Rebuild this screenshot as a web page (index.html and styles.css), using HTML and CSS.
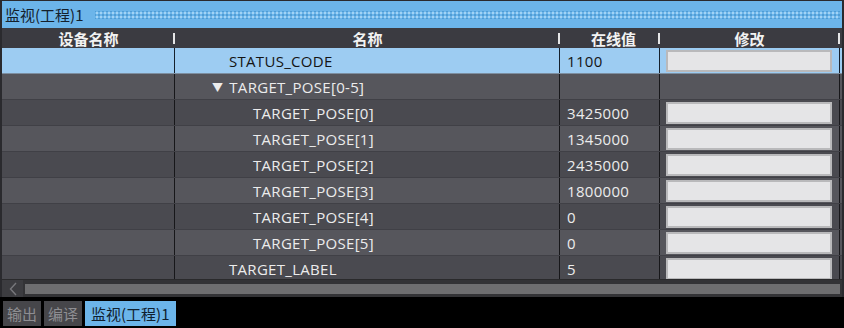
FILE: index.html
```html
<!DOCTYPE html>
<html lang="zh-CN">
<head>
    <meta charset="UTF-8" />
    <title>监视(工程)1</title>
    <link rel="stylesheet" href="styles.css">
</head>
<body>
    <div class="monitor">
        <div class="title-bar">
            <span class="title">监视(工程)1</span>
            <span class="grip"></span>
        </div>

        <div class="grid-head">
            <div class="cell c-dev">设备名称</div>
            <div class="cell c-name">名称</div>
            <div class="cell c-val">在线值</div>
            <div class="cell c-mod">修改</div>
            <div class="cell c-end"></div>
        </div>

        <div class="grid-body">
            <div class="row selected">
                <div class="cell c-dev"></div>
                <div class="cell c-name lvl-1">STATUS_CODE</div>
                <div class="cell c-val">1100</div>
                <div class="cell c-mod"><span class="edit"></span></div>
                <div class="cell c-end"></div>
            </div>
            <div class="row light">
                <div class="cell c-dev"></div>
                <div class="cell c-name lvl-0"><span class="caret">▼</span>TARGET_POSE[0-5]</div>
                <div class="cell c-val"></div>
                <div class="cell c-mod"></div>
                <div class="cell c-end"></div>
            </div>
            <div class="row dark">
                <div class="cell c-dev"></div>
                <div class="cell c-name lvl-2">TARGET_POSE[0]</div>
                <div class="cell c-val">3425000</div>
                <div class="cell c-mod"><span class="edit"></span></div>
                <div class="cell c-end"></div>
            </div>
            <div class="row light">
                <div class="cell c-dev"></div>
                <div class="cell c-name lvl-2">TARGET_POSE[1]</div>
                <div class="cell c-val">1345000</div>
                <div class="cell c-mod"><span class="edit"></span></div>
                <div class="cell c-end"></div>
            </div>
            <div class="row dark">
                <div class="cell c-dev"></div>
                <div class="cell c-name lvl-2">TARGET_POSE[2]</div>
                <div class="cell c-val">2435000</div>
                <div class="cell c-mod"><span class="edit"></span></div>
                <div class="cell c-end"></div>
            </div>
            <div class="row light">
                <div class="cell c-dev"></div>
                <div class="cell c-name lvl-2">TARGET_POSE[3]</div>
                <div class="cell c-val">1800000</div>
                <div class="cell c-mod"><span class="edit"></span></div>
                <div class="cell c-end"></div>
            </div>
            <div class="row dark">
                <div class="cell c-dev"></div>
                <div class="cell c-name lvl-2">TARGET_POSE[4]</div>
                <div class="cell c-val">0</div>
                <div class="cell c-mod"><span class="edit"></span></div>
                <div class="cell c-end"></div>
            </div>
            <div class="row light">
                <div class="cell c-dev"></div>
                <div class="cell c-name lvl-2">TARGET_POSE[5]</div>
                <div class="cell c-val">0</div>
                <div class="cell c-mod"><span class="edit"></span></div>
                <div class="cell c-end"></div>
            </div>
            <div class="row dark">
                <div class="cell c-dev"></div>
                <div class="cell c-name lvl-1">TARGET_LABEL</div>
                <div class="cell c-val">5</div>
                <div class="cell c-mod"><span class="edit"></span></div>
                <div class="cell c-end"></div>
            </div>
        </div>

        <div class="hscroll">
            <div class="arrow">
                <svg width="8" height="14" viewBox="0 0 8 14"><path d="M7 1 L1.5 7 L7 13" fill="none" stroke="#77777b" stroke-width="1.4"/></svg>
            </div>
            <div class="thumb"></div>
        </div>
    </div>

    <div class="tabs">
        <div class="tab">输出</div>
        <div class="tab">编译</div>
        <div class="tab active">监视(工程)1</div>
    </div>
</body>
</html>
```

FILE: styles.css
```css
* {
    margin: 0;
    padding: 0;
    box-sizing: border-box;
}

body {
    width: 844px;
    height: 328px;
    overflow: hidden;
    background: #000000;
    font-family: 'Open Sans', 'Noto Sans CJK SC', sans-serif;
    font-size: 15px;
}

/* Monitor panel */
.monitor {
    height: 297px;
    display: flex;
    flex-direction: column;
    background: #2e2e32;
    border-left: 2px solid #2a2a2e;
    border-right: 2px solid #2a2a2e;
    border-top: 1px solid #2a2a2e;
}

.title-bar {
    height: 27px;
    display: flex;
    align-items: center;
    gap: 12px;
    padding-left: 3px;
    background: #6cb5ea;
}

.title {
    font-family: 'Noto Sans CJK SC', sans-serif;
    font-size: 15px;
    color: #14202c;
}

.grip {
    flex: 1;
    height: 8px;
    margin-right: 2px;
    background-image:
        radial-gradient(circle, #a2d3f5 0.9px, transparent 1.2px),
        radial-gradient(circle, #4f9cd4 0.9px, transparent 1.2px);
    background-size: 4px 4px, 4px 4px;
    background-position: 0 0, 2px 2px;
}

/* Grid columns */
.grid-head,
.row {
    display: flex;
}

.cell {
    flex: none;
    display: flex;
    align-items: center;
    position: relative;
    white-space: nowrap;
}

.c-dev { width: 173px; }
.c-name { width: 385px; }
.c-val { width: 100px; }
.c-mod { width: 180px; }
.c-end { flex: 1; }

/* Header */
.grid-head {
    height: 20px;
    background: #3b3b41;
}

.grid-head .cell {
    justify-content: center;
    font-family: 'Noto Sans CJK SC', sans-serif;
    font-weight: 700;
    font-size: 15px;
    color: #f2f2f2;
}

.grid-head .cell:not(.c-end)::after {
    content: '';
    position: absolute;
    right: 0;
    top: 5px;
    width: 2px;
    height: 11px;
    background: #e6e6e6;
}

/* Body rows */
.grid-body {
    flex: 1;
    overflow: hidden;
}

.row {
    height: 26px;
    border-bottom: 1px solid #404046;
    color: #ececec;
    letter-spacing: 0.3px;
}

.row .cell:not(.c-end) {
    border-right: 1px solid #17171a;
}

.row.selected {
    background: #9dccf2;
    color: #141414;
    border-bottom-color: #7d8ea0;
}

.row.selected .cell:not(.c-end) {
    border-right-color: #15202c;
}

.row.light { background: #56565c; }
.row.dark { background: #4a4a50; }

.lvl-0 { padding-left: 37px; }
.lvl-1 { padding-left: 54px; }
.lvl-2 { padding-left: 78px; }

.caret {
    font-size: 11px;
    margin-right: 6px;
}

.c-val { padding-left: 7px; }

.c-mod { padding: 2px 7px 1px 6px; }

.edit {
    width: 100%;
    height: 100%;
    background: #e5e5e7;
    border: 2px solid #b9b9bb;
}

/* Horizontal scrollbar */
.hscroll {
    height: 18px;
    display: flex;
    align-items: center;
    gap: 2px;
    background: #333336;
    border-top: 1px solid #2a2a2c;
    padding-right: 2px;
}

.arrow {
    width: 21px;
    height: 100%;
    display: flex;
    align-items: center;
    justify-content: center;
    background: #3c3c40;
}

.thumb {
    flex: 1;
    height: 10px;
    background: #6e6e70;
}

/* Bottom tabs */
.tabs {
    display: flex;
    gap: 3px;
    padding: 4px 0 0 3px;
}

.tab {
    height: 25px;
    padding: 0 4px;
    display: flex;
    align-items: center;
    background: #46464a;
    color: #8e8e92;
    font-family: 'Noto Sans CJK SC', sans-serif;
    font-size: 15px;
}

.tab.active {
    padding: 0 6px;
    background: #6cb5ea;
    color: #10202e;
}
```
